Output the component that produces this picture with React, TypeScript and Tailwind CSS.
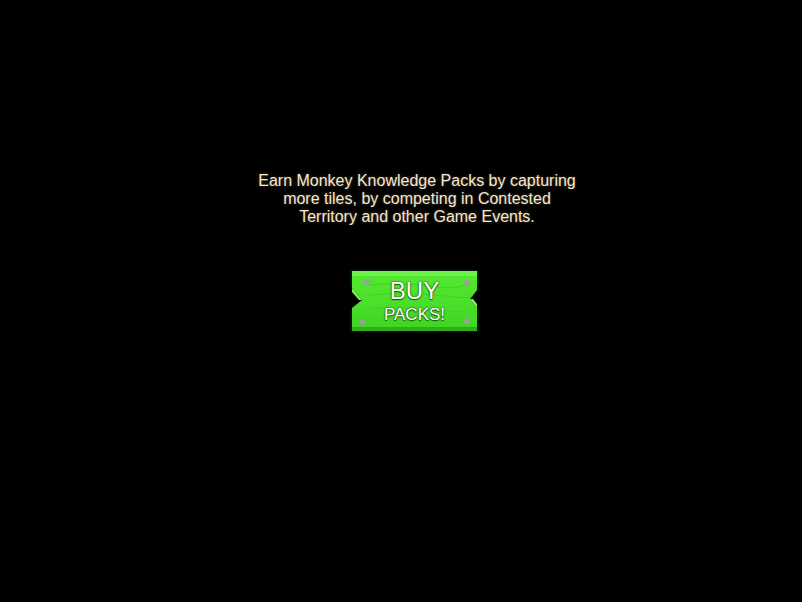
export default function App() {
  const txtShadow = "[text-shadow:0_0_1px_#155a0c,0_0_2px_#155a0c,0_1px_1px_#155a0c]";
  return (
    <div className="w-[802px] h-[602px] bg-black flex flex-col items-center pt-[172px]" style={{ fontFamily: '"Liberation Sans", Arial, sans-serif' }}>
      <p className="text-[16px] leading-[18px] text-center text-[#f1e8d6] whitespace-nowrap ml-[32px] [text-shadow:0_0_3px_rgba(170,130,70,0.55)]">
        Earn Monkey Knowledge Packs by capturing
        <br />
        more tiles, by competing in Contested
        <br />
        Territory and other Game Events.
      </p>
      <div className="relative mt-[43px] ml-[27px] w-[131px] h-[64px] flex flex-col items-center pt-[10px]">
        <svg className="absolute inset-0" width="131" height="64" viewBox="0 0 131 64">
          <defs>
            <linearGradient id="g" x1="0" y1="0" x2="0" y2="1">
              <stop offset="0" stopColor="#55e832" />
              <stop offset="0.5" stopColor="#4be02b" />
              <stop offset="1" stopColor="#3fd423" />
            </linearGradient>
          </defs>
          <polygon points="1,1 130,1 130,19 123,30 130,41 130,63 1,63 1,41 15,31 1,17" fill="#061806" />
          <polygon points="3,2 128,2 128,21 121,30 128,39 128,62 3,62 3,39 13,31 3,19" fill="url(#g)" />
          <polygon points="3,2 128,2 128,7 3,7" fill="#6cf24b" />
          <polygon points="3,19 13,31 10,31 3,23" fill="#7af55a" />
          <polygon points="128,39 121,30 124,30 128,35" fill="#7af55a" />
          <polygon points="3,58 128,58 128,62 3,62" fill="#2eae1a" />
          <path d="M20 16 Q50 13 80 17 T118 15" stroke="#42d326" strokeWidth="1" fill="none" />
          <path d="M18 26 Q60 23 95 27 T119 25" stroke="#42d326" strokeWidth="1" fill="none" />
          <path d="M16 40 Q50 37 85 41 T120 39" stroke="#42d326" strokeWidth="1" fill="none" />
          <path d="M8 50 Q40 47 80 51 T122 49" stroke="#42d326" strokeWidth="1" fill="none" />
          <circle cx="18" cy="13" r="3" fill="#98a296" />
          <circle cx="118" cy="14" r="3" fill="#98a296" />
          <circle cx="14" cy="53" r="3" fill="#98a296" />
          <circle cx="118" cy="52" r="3" fill="#98a296" />
        </svg>
        <span className={`relative text-[24px] leading-[24px] text-white ${txtShadow}`}>BUY</span>
        <span className={`relative mt-[4px] text-[17px] leading-[16px] text-white ${txtShadow}`}>PACKS!</span>
      </div>
    </div>
  );
}
